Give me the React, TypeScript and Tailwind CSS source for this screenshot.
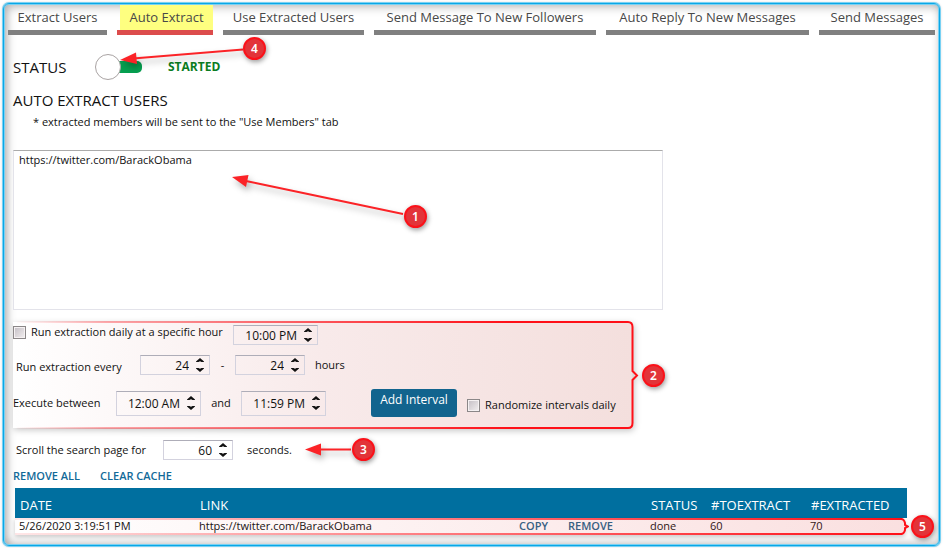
import { useState } from "react";
import type { ReactNode } from "react";

const tabs = [
  "Extract Users",
  "Auto Extract",
  "Use Extracted Users",
  "Send Message To New Followers",
  "Auto Reply To New Messages",
  "Send Messages",
];

function Spinner({ id, label, value, className }: { id: string; label: string; value: string; className: string }) {
  const [text, setText] = useState(value);
  return (
    <span className={`flex shrink-0 items-center border border-[#d3d2de] border-t-[#aeadb8] ${className}`}>
      <input
        id={id}
        aria-label={label}
        value={text}
        onChange={(e) => setText(e.target.value)}
        className="h-full w-full min-w-0 bg-transparent text-right text-[12px] outline-none"
      />
      <span className="flex w-5 shrink-0 flex-col items-center gap-1.5 pr-[3px] pl-[5px]">
        <button type="button" aria-label={`Increase ${label}`} className="block">
          <svg width="8" height="4" viewBox="0 0 8 4" className="block">
            <path d="M4 0L8 3.500v.5H5.500L4 3.300 2.500 4H0V3.500z" fill="#111" />
          </svg>
        </button>
        <button type="button" aria-label={`Decrease ${label}`} className="block">
          <svg width="8" height="4" viewBox="0 0 8 4" className="block">
            <path d="M4 4L0 .5V0h2.500L4 .7 5.500 0H8v.5z" fill="#111" />
          </svg>
        </button>
      </span>
    </span>
  );
}

function Tick({ id }: { id: string }) {
  return (
    <input
      id={id}
      type="checkbox"
      className="size-[13px] shrink-0 appearance-none border border-[#8b8788] bg-linear-to-br from-[#c3bec4] to-[#f3eff0] shadow-[inset_0_0_0_1px_#f5f1f2] checked:bg-[#006f9f]"
    />
  );
}

function Badge({ children, className }: { children: ReactNode; className: string }) {
  return (
    <span
      className={`pointer-events-none absolute flex size-[23px] items-center justify-center rounded-full border-2 border-[#fb1119] bg-[#e23439] font-['Noto_Sans',sans-serif] text-[12px] font-semibold text-white shadow-[1px_2px_5px_rgba(0,0,0,0.4)] ${className}`}
    >
      {children}
    </span>
  );
}

function Arrows() {
  return (
    <svg
      width="480"
      height="470"
      viewBox="0 0 480 470"
      className="pointer-events-none absolute top-0 left-0 drop-shadow-[2px_4px_3px_rgba(0,0,0,0.3)]"
      fill="#fb2327"
      stroke="#fb2327"
    >
      <path d="M243 49.500L136 58.200" strokeWidth="2" />
      <path d="M120 60L136 52.500L137 64z" stroke="none" />
      <path d="M403 214L246 181" strokeWidth="2" />
      <path d="M232 177L248.500 175L246 187z" stroke="none" />
      <path d="M351 449.500H320" strokeWidth="2" />
      <path d="M305 449.500L321 443.500V455.500z" stroke="none" />
    </svg>
  );
}

export default function App() {
  const [tab, setTab] = useState(1);
  const [urls, setUrls] = useState("https://twitter.com/BarackObama");
  const [on, setOn] = useState(true);

  return (
    <div className="relative bg-white p-[3px] font-['Open_Sans',sans-serif] text-[11px] leading-4 text-[#111]">
      <main className="rounded-[6px] border border-[#0aa7e6] px-px pt-px pb-[11px] shadow-[inset_0_0_0_1px_#79d1f3,inset_4px_4px_8px_rgba(0,0,0,0.22),inset_0_-3px_8px_rgba(0,0,0,0.2),0_0_0_1px_#79d1f3,0_0_3px_rgba(0,0,0,0.3)]">
        <nav className="grid grid-cols-[99fr_96fr_141fr_222fr_203fr_116fr] gap-2.5 px-[3px]">
          {tabs.map((t, i) => (
            <button
              key={t}
              type="button"
              onClick={() => setTab(i)}
              className={`flex h-[30px] min-w-0 items-start justify-center border-b-[5px] text-[13px] leading-[25px] whitespace-nowrap text-[#484848] ${
                i === tab ? "border-[#dc4c4c]" : "border-[#808080]"
              }`}
            >
              <span className={i === tab ? "ml-[3px] h-full w-full bg-[#feff80]" : ""}>{t}</span>
            </button>
          ))}
        </nav>

        <div className="flex flex-col items-start pr-[31px] pl-2">
          <div className="mt-[18px] flex h-[28px] items-center text-[15px]">
            <span className="w-[82px]">STATUS</span>
            <button
              type="button"
              role="switch"
              aria-checked={on}
              aria-label="Status"
              onClick={() => setOn(!on)}
              className="flex w-[47px] items-center"
            >
              <span className="z-10 size-[26px] shrink-0 rounded-full border border-[#a9a3a3] bg-white" />
              <span className="-ml-2.5 h-3 grow rounded-r-[5px] bg-[#06a050]" />
            </button>
            <span className="ml-[26px] text-[12px] font-bold text-[#0a7c22]">STARTED</span>
          </div>

          <h1 className="mt-[9px] text-[15px] leading-5">AUTO EXTRACT USERS</h1>
          <p className="mt-1 pl-5">* extracted members will be sent to the "Use Members" tab</p>

          <textarea
            aria-label="Users to extract"
            value={urls}
            onChange={(e) => setUrls(e.target.value)}
            spellCheck={false}
            className="mt-5 block h-40 w-[650px] resize-none border border-[#e3e3ea] border-t-[#ababab] bg-white px-[5px] py-[1px] text-[11px] leading-4 outline-none"
          />

          <section className="relative mt-[11px] h-[108px] w-[620px]">
            <svg
              viewBox="0 0 628 108"
              className="pointer-events-none absolute top-0 left-0 h-[108px] w-[628px] overflow-visible drop-shadow-[1px_2px_3px_rgba(0,0,0,0.22)]"
              fill="none"
            >
              <defs>
                <linearGradient id="fade" x1="0" x2="1" y1="0" y2="0">
                  <stop offset="0" stopColor="#fff" />
                  <stop offset="0.5" stopColor="#f8eaea" />
                  <stop offset="1" stopColor="#f4dfdd" />
                </linearGradient>
                <linearGradient id="edge" x1="0" x2="620" y1="0" y2="0" gradientUnits="userSpaceOnUse">
                  <stop offset="0" stopColor="#ff1018" stopOpacity="0" />
                  <stop offset="0.15" stopColor="#ff1018" stopOpacity="0.35" />
                  <stop offset="0.8" stopColor="#ff1018" />
                </linearGradient>
              </defs>
              <path d="M0 1H615Q619.500 1 619.500 6V102Q619.500 107 615 107H0z" fill="url(#fade)" />
              <path
                d="M4 1H615Q619.500 1 619.500 6V50L624 54.500L619.500 59V102Q619.500 107 615 107H4"
                stroke="url(#edge)"
                strokeWidth="2"
              />
            </svg>
            <div className="relative">
              <div className="flex items-start pt-[3px]">
                <div className="flex w-[220px] items-center gap-[5px]">
                  <Tick id="daily" />
                  <label htmlFor="daily" className="whitespace-nowrap">
                    Run extraction daily at a specific hour
                  </label>
                </div>
                <Spinner id="hour" label="Daily hour" value="10:00 PM" className="mt-px h-5 w-[85px]" />
              </div>
              <div className="mt-2.5 flex h-5 items-center">
                <label htmlFor="min" className="w-[127px] pt-1 pl-[3px]">
                  Run extraction every
                </label>
                <Spinner id="min" label="Minimum hours" value="24" className="h-5 w-[70px]" />
                <span className="w-[25px] text-center">-</span>
                <Spinner id="max" label="Maximum hours" value="24" className="h-5 w-[70px]" />
                <label htmlFor="max" className="ml-2.5">
                  hours
                </label>
              </div>
              <div className="mt-3.5 flex h-7 items-center">
                <label htmlFor="from" className="w-[103px]">
                  Execute between
                </label>
                <Spinner id="from" label="Start time" value="12:00 AM" className="h-[25px] w-[85px]" />
                <label htmlFor="to" className="w-10 text-center">
                  and
                </label>
                <Spinner id="to" label="End time" value="11:59 PM" className="h-[25px] w-[85px]" />
                <button
                  type="button"
                  className="ml-[45px] flex h-7 w-[86px] justify-center rounded-[3px] bg-[#12648e] pt-[3px] text-[12px] text-white"
                >
                  Add Interval
                </button>
                <div className="ml-2.5 flex items-center gap-[5px] pt-1">
                  <Tick id="random" />
                  <label htmlFor="random" className="whitespace-nowrap">
                    Randomize intervals daily
                  </label>
                </div>
              </div>
            </div>
            <Badge className="top-[43px] left-[629px]">2</Badge>
          </section>

          <div className="mt-[11px] flex h-5 items-center">
            <label htmlFor="scroll" className="w-[150px] pl-[3px] whitespace-nowrap">
              Scroll the search page for
            </label>
            <Spinner id="scroll" label="Scroll seconds" value="60" className="h-5 w-[70px]" />
            <span className="ml-3.5">seconds.</span>
          </div>

          <div className="mt-2 flex gap-5 font-semibold text-[#126a98]">
            <button type="button">REMOVE ALL</button>
            <button type="button">CLEAR CACHE</button>
          </div>

          <div className="relative mt-1 w-full pl-0.5">
            <table className="w-full table-fixed border-collapse text-left">
              <colgroup>
                <col className="w-[180px]" />
                <col />
                <col className="w-[49px]" />
                <col className="w-[82px]" />
                <col className="w-[60px]" />
                <col className="w-[100px]" />
                <col className="w-[101px]" />
              </colgroup>
              <thead>
                <tr className="h-[30px] bg-[#006f9f] text-[13px] text-white">
                  {["DATE", "LINK", "", "", "STATUS", "#TOEXTRACT", "#EXTRACTED"].map((h, i) => (
                    <th key={i} className="pt-1 pl-[5px] font-normal whitespace-nowrap">
                      {h}
                    </th>
                  ))}
                </tr>
              </thead>
              <tbody>
                <tr className="h-4 whitespace-nowrap">
                  <td className="pl-1">5/26/2020 3:19:51 PM</td>
                  <td className="pl-1">https://twitter.com/BarackObama</td>
                  <td className="pl-1 font-semibold text-[#25648a]">
                    <button type="button">COPY</button>
                  </td>
                  <td className="pl-1 font-semibold text-[#25648a]">
                    <button type="button">REMOVE</button>
                  </td>
                  <td className="pl-1">done</td>
                  <td className="pl-1">60</td>
                  <td className="pl-1">70</td>
                </tr>
              </tbody>
            </table>
            <div className="pointer-events-none absolute right-px bottom-[-1px] left-0.5 h-[17px] rounded-r-[5px] bg-linear-to-r from-transparent to-[rgba(225,60,60,0.16)] shadow-[0_2px_4px_rgba(0,0,0,0.2)]">
              <div className="absolute top-0 right-1 left-0 h-0.5 bg-linear-to-r from-[rgba(255,16,24,0.1)] to-[#ff1018]" />
              <div className="absolute right-1 bottom-0 left-0 h-0.5 bg-linear-to-r from-[rgba(255,16,24,0.1)] to-[#ff1018]" />
              <svg width="8" height="17" viewBox="0 0 8 17" className="absolute top-0 right-[-3px]" fill="none">
                <path d="M0 1Q3 1 4 5V7L7 8.500L4 10V12Q3 16 0 16" stroke="#ff1018" strokeWidth="2" />
              </svg>
            </div>
            <Badge className="right-[-27px] bottom-[-4px]">5</Badge>
          </div>
        </div>
      </main>
      <Arrows />
      <Badge className="top-[37px] left-[243px]">4</Badge>
      <Badge className="top-[205px] left-[404px]">1</Badge>
      <Badge className="top-[438px] left-[352px]">3</Badge>
    </div>
  );
}
